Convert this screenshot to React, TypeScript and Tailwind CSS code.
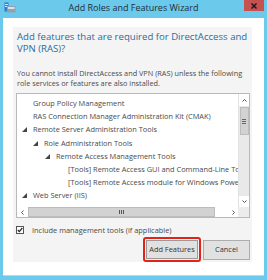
import React from "react";

const rows: { text: string; pl: string; tri: boolean }[] = [
  { text: "Group Policy Management", pl: "pl-[4px]", tri: false },
  { text: "RAS Connection Manager Administration Kit (CMAK)", pl: "pl-[4px]", tri: false },
  { text: "Remote Server Administration Tools", pl: "pl-[4px]", tri: true },
  { text: "Role Administration Tools", pl: "pl-[15px]", tri: true },
  { text: "Remote Access Management Tools", pl: "pl-[27px]", tri: true },
  { text: "[Tools] Remote Access GUI and Command-Line Tools", pl: "pl-[39px]", tri: false },
  { text: "[Tools] Remote Access module for Windows PowerShell", pl: "pl-[39px]", tri: false },
  { text: "Web Server (IIS)", pl: "pl-[4px]", tri: true },
  { text: "Management Tools", pl: "pl-[15px]", tri: true },
];

function Tri() {
  return (
    <svg width="5" height="5" viewBox="0 0 5 5" className="ml-[1px]">
      <polygon points="5,0 5,5 0,5" fill="#444" />
    </svg>
  );
}

export default function App() {
  return (
    <div
      className="w-[267px] h-[280px] bg-[#6bc9eb] flex flex-col overflow-hidden"
      style={{ fontFamily: '"Open Sans", "Noto Sans", sans-serif' }}
    >
      {/* title bar */}
      <div className="h-[18px] flex items-start shrink-0">
        <div className="w-[60px] pl-[4px] pt-[2px] flex">
          <svg width="12" height="11" viewBox="0 0 12 11">
            <rect x="0.5" y="0.5" width="4" height="9" fill="#2a7fd0" />
            <rect x="1" y="2" width="3" height="1" fill="#cfe8ff" />
            <rect x="1" y="4" width="3" height="1" fill="#cfe8ff" />
            <rect x="3" y="4" width="8.5" height="6.5" fill="#8fa2b0" />
            <rect x="4" y="5" width="6.5" height="2" fill="#d8e2ea" />
          </svg>
        </div>
        <div className="flex-1 min-w-0 text-center text-[9px] leading-[15px] text-[#1f2f3a] whitespace-nowrap">
          Add Roles and Features Wizard
        </div>
        <div className="w-[60px] flex justify-end pr-[3px]">
          <div className="w-[20px] h-[11px] bg-[#c75050] flex items-center justify-center">
            <svg width="6" height="6" viewBox="0 0 6 6">
              <path d="M0.5 0.5 L5.5 5.5 M5.5 0.5 L0.5 5.5" stroke="#1a1a1a" strokeWidth="1.5" />
            </svg>
          </div>
        </div>
      </div>

      {/* window body */}
      <div className="mx-[3px] h-[258px] bg-white border-b border-[#d0d0d0] pt-[9px] pl-[10px] pr-[12px] pb-[13px] flex">
        <div className="flex-1 min-w-0 bg-[#f4f4f4] flex flex-col pl-[3px] pr-[2px]">
          <div className="pt-[4px] pl-[1px] text-[9.6px] leading-[12px] text-[#2b6c9b]">
            Add features that are required for DirectAccess and VPN (RAS)?
          </div>
          <div className="mt-[13px] pl-[1px] text-[7.3px] leading-[10px] text-[#4a4a4a]">
            You cannot install DirectAccess and VPN (RAS) unless the following role services or features are also installed.
          </div>

          {/* list box */}
          <div className="mt-[5px] h-[125px] bg-white border border-[#b9b9b9] flex flex-col">
            <div className="flex flex-1 min-h-0">
              <div className="flex-1 min-w-0 overflow-hidden pt-[3px]">
                {rows.map((r, i) => (
                  <div
                    key={i}
                    className={`h-[13.2px] flex items-center whitespace-nowrap ${r.pl}`}
                  >
                    <div className="w-[12px] shrink-0 flex items-center">{r.tri ? <Tri /> : null}</div>
                    <span className="text-[7.4px] text-[#4a4a4a]">{r.text}</span>
                  </div>
                ))}
              </div>
              {/* vertical scrollbar */}
              <div className="w-[11px] shrink-0 bg-[#e9e9e9] flex flex-col items-center border-l border-[#e2e2e2]">
                <div className="h-[12px] w-full bg-white flex items-center justify-center">
                  <svg width="5" height="3" viewBox="0 0 5 3">
                    <path d="M0.5 2.5 L2.5 0.5 L4.5 2.5" stroke="#555" strokeWidth="1" fill="none" />
                  </svg>
                </div>
                <div className="mt-[1px] w-[9px] h-[28px] bg-[#d2d2d2] border border-[#bcbcbc] flex flex-col items-center justify-center gap-[1px]">
                  <div className="w-[4px] h-[1px] bg-[#666]" />
                  <div className="w-[4px] h-[1px] bg-[#666]" />
                  <div className="w-[4px] h-[1px] bg-[#666]" />
                </div>
                <div className="flex-1" />
                <div className="h-[11px] w-full bg-white flex items-center justify-center">
                  <svg width="5" height="3" viewBox="0 0 5 3">
                    <path d="M0.5 0.5 L2.5 2.5 L4.5 0.5" stroke="#555" strokeWidth="1" fill="none" />
                  </svg>
                </div>
              </div>
            </div>
            {/* horizontal scrollbar */}
            <div className="h-[10px] flex shrink-0">
              <div className="flex-1 min-w-0 flex bg-[#e9e9e9]">
                <div className="w-[11px] shrink-0 bg-white flex items-center justify-center">
                  <svg width="3" height="5" viewBox="0 0 3 5">
                    <path d="M2.5 0.5 L0.5 2.5 L2.5 4.5" stroke="#555" strokeWidth="1" fill="none" />
                  </svg>
                </div>
                <div className="w-[187px] shrink-0 bg-[#d2d2d2] border border-[#bcbcbc] flex items-center justify-center gap-[1px]">
                  <div className="w-[1px] h-[4px] bg-[#555]" />
                  <div className="w-[1px] h-[4px] bg-[#555]" />
                  <div className="w-[1px] h-[4px] bg-[#555]" />
                </div>
                <div className="flex-1 bg-white" />
                <div className="w-[9px] shrink-0 bg-white flex items-center justify-center">
                  <svg width="3" height="5" viewBox="0 0 3 5">
                    <path d="M0.5 0.5 L2.5 2.5 L0.5 4.5" stroke="#555" strokeWidth="1" fill="none" />
                  </svg>
                </div>
              </div>
              <div className="w-[11px] shrink-0 bg-[#ececec]" />
            </div>
          </div>

          {/* checkbox */}
          <div className="mt-[7px] flex items-center pl-[0px]">
            <div className="w-[8px] h-[8px] border border-[#555] bg-white flex items-center justify-center">
              <svg width="6" height="6" viewBox="0 0 6 6">
                <path d="M0.8 3 L2.3 4.6 L5.3 1" stroke="#222" strokeWidth="1.2" fill="none" />
              </svg>
            </div>
            <span className="ml-[8px] text-[7.4px] leading-[10px] text-[#4a4a4a]">
              Include management tools (if applicable)
            </span>
          </div>

          {/* buttons */}
          <div className="mt-[2px] flex justify-end items-center">
            <div className="border-2 border-[#e2231a] rounded-[3px] p-[1px]">
              <div className="w-[52px] h-[19px] bg-[#e1e1e1] border border-[#9a9a9a] flex items-center justify-center text-[7.4px] text-[#333] whitespace-nowrap">
                Add Features
              </div>
            </div>
            <div className="ml-[2px] w-[47px] h-[20px] bg-[#e1e1e1] border border-[#adadad] flex items-center justify-center text-[7.4px] text-[#333]">
              Cancel
            </div>
          </div>
        </div>
      </div>
    </div>
  );
}
